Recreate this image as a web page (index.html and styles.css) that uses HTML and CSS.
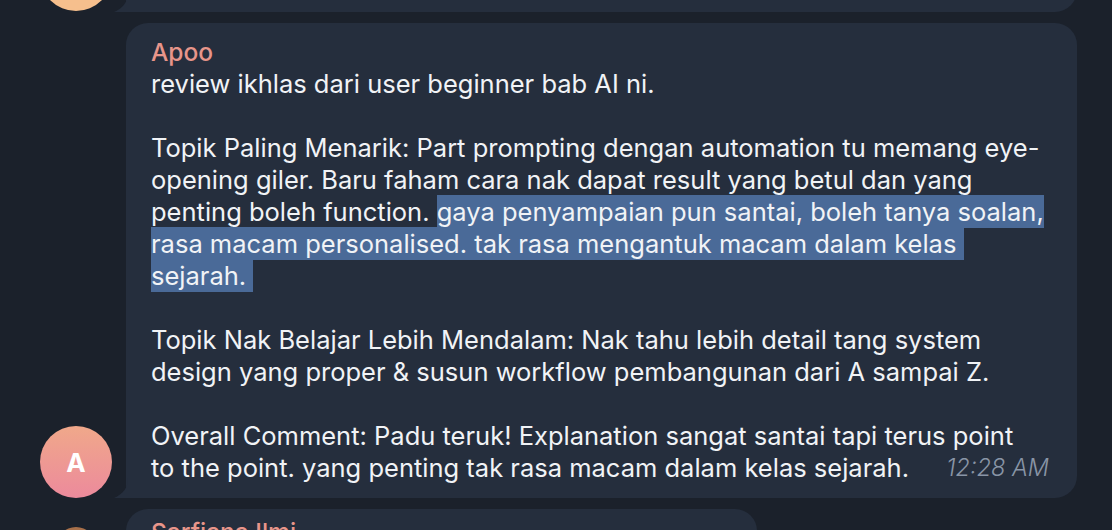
FILE: index.html
```html
<!DOCTYPE html>
<html>
<head>
<meta charset="utf-8">
<link rel="stylesheet" href="styles.css">
</head>
<body>
<div class="chat">
  <div class="row row-prev">
    <div class="avatar avatar-peach"></div>
    <div class="bubble bubble-prev">
      <svg class="tail" width="14" height="20" viewBox="0 0 14 20"><path d="M14 0 C14 10 9 16 0 20 L14 20 Z" fill="#252e3d"/></svg>
    </div>
  </div>

  <div class="row">
    <div class="avatar avatar-a">A</div>
    <div class="bubble bubble-main">
      <svg class="tail" width="14" height="20" viewBox="0 0 14 20"><path d="M14 0 C14 10 9 16 0 20 L14 20 Z" fill="#252e3d"/></svg>
      <div class="name">Apoo</div>
      <p class="para">review ikhlas dari user beginner bab AI ni.</p>
      <p class="para">Topik Paling Menarik: Part prompting dengan automation tu memang eye-<br>opening giler. Baru faham cara nak dapat result yang betul dan yang<br>penting boleh function. <span class="sel">gaya penyampaian pun santai, boleh tanya soalan,</span><br><span class="sel">rasa macam personalised. tak rasa mengantuk macam dalam kelas&nbsp;</span><br><span class="sel">sejarah.&nbsp;</span></p>
      <p class="para">Topik Nak Belajar Lebih Mendalam: Nak tahu lebih detail tang system<br>design yang proper &amp; susun workflow pembangunan dari A sampai Z.</p>
      <p class="para last">Overall Comment: Padu teruk! Explanation sangat santai tapi terus point<br><span class="time">12:28 AM</span>to the point. yang penting tak rasa macam dalam kelas sejarah.</p>
    </div>
  </div>

  <div class="row row-next">
    <div class="avatar avatar-photo"></div>
    <div class="bubble bubble-next">
      <div class="name name-next">Sarfiana Ilmi</div>
    </div>
  </div>
</div>
</body>
</html>
```
FILE: styles.css
```css
html, body {
  margin: 0;
  padding: 0;
  background: #1b212b;
  overflow: hidden;
  height: 530px;
}
body {
  font-family: Inter, "Noto Sans", sans-serif;
  color: #f1f3f6;
}
.chat {
  display: flex;
  flex-direction: column;
  gap: 11px;
  margin-top: -68px;
}
.row {
  display: flex;
  align-items: flex-end;
  gap: 14px;
  padding-left: 40px;
}
.avatar {
  width: 72px;
  height: 72px;
  border-radius: 50%;
  flex: none;
  display: flex;
  align-items: center;
  justify-content: center;
  font-weight: 700;
  font-size: 26px;
  color: #fff;
}
.avatar-peach {
  background: #f6bf8d;
  margin-bottom: 1px;
}
.avatar-a {
  background: linear-gradient(180deg, #f0a88a 0%, #ec8a9c 100%);
}
.avatar-photo {
  width: 40px;
  height: 40px;
  margin-left: 16px;
  margin-right: 16px;
  background: #a8704a;
}
.row-next {
  align-items: flex-start;
}
.row-next .avatar {
  margin-top: 18px;
}
.bubble {
  position: relative;
  background: #252e3d;
  border-radius: 22px;
  border-bottom-left-radius: 0;
}
.tail {
  position: absolute;
  left: -12px;
  bottom: 0;
  display: block;
}
.bubble-prev {
  width: 951px;
  height: 80px;
}
.bubble-main {
  width: 951px;
  box-sizing: border-box;
  padding: 13px 28px 14px 25px;
}
.bubble-next {
  width: 631px;
  height: 60px;
  padding: 0 25px;
  box-sizing: border-box;
}
.name {
  color: #e8958a;
  font-size: 24.5px;
  line-height: 32px;
  font-weight: 500;
}
.name-next {
  line-height: 20px;
  padding-top: 13px;
  font-size: 24.5px;
}
.para {
  margin: 0 0 32px 0;
  font-size: 25.5px;
  line-height: 32px;
  white-space: nowrap;
}
.sel {
  background: #4a6a98;
  padding: 1px 0;
}
.last {
  margin: 0;
}
.time {
  float: right;
  font-size: 23.5px;
  font-style: italic;
  font-weight: 300;
  color: #8995a6;
  line-height: 32px;
}
```
